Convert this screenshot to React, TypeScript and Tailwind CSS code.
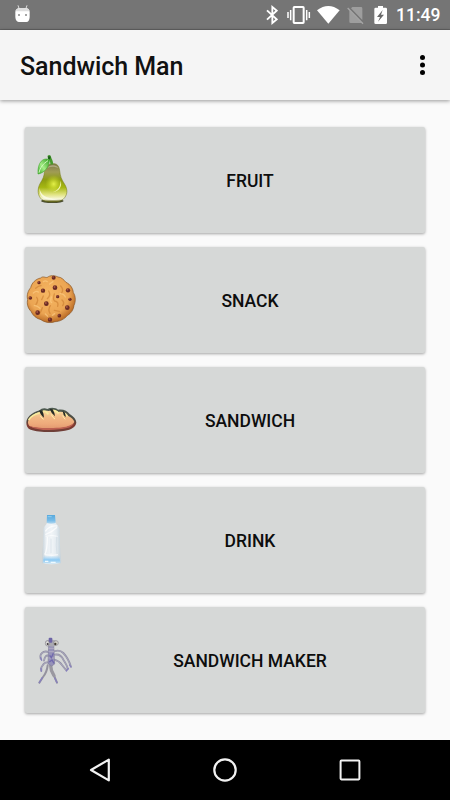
import type { ReactNode } from "react";

interface MenuItem {
  label: string;
  icon: ReactNode;
}

function PearIcon() {
  return (
    <svg viewBox="30 45 150 150" className="w-[50px] h-[50px] shrink-0 overflow-visible">
      <defs>
        <linearGradient id="pear" x1="0" y1="0" x2="0" y2="1">
          <stop offset="0" stopColor="#7d7a4c" />
          <stop offset="0.22" stopColor="#a09c55" />
          <stop offset="0.42" stopColor="#8d9c12" />
          <stop offset="0.62" stopColor="#a5b612" />
          <stop offset="0.8" stopColor="#dfe27c" />
          <stop offset="0.93" stopColor="#f8f7dc" />
          <stop offset="1" stopColor="#57570f" />
        </linearGradient>
        <radialGradient id="pearShine">
          <stop offset="0" stopColor="#e3f04a" />
          <stop offset="1" stopColor="#c8d820" stopOpacity="0" />
        </radialGradient>
        <linearGradient id="leaf" x1="0" y1="1" x2="1" y2="0">
          <stop offset="0" stopColor="#3aa52c" />
          <stop offset="0.45" stopColor="#a5ee86" />
          <stop offset="1" stopColor="#2f9a20" />
        </linearGradient>
      </defs>
      <ellipse cx="112" cy="183" rx="34" ry="6" fill="#4b4d30" />
      <path
        d="M116 71C101 70 92 78 89 92C87 111 84 116 75 131C66 148 68 168 80 178C90 188 134 188 144 178C158 166 159 149 149 133C139 117 136 109 134 92C132 78 127 71 116 71Z"
        fill="url(#pear)"
        stroke="#71760f"
        strokeWidth="1.5"
      />
      <ellipse cx="116" cy="132" rx="25" ry="27" fill="url(#pearShine)" />
      <path d="M137 122C142 139 133 153 113 157C130 150 136 140 137 122Z" fill="#f4f7b5" />
      <path d="M97 84C102 73 126 72 130 85C121 79 107 79 97 84Z" fill="#c1bd98" opacity="0.7" />
      <path d="M74 144C76 164 90 177 134 178C91 186 71 171 74 144Z" fill="#fbfbe8" opacity="0.85" />
      <path d="M98 52C96 46 103 43 107 47C109 56 114 60 115 73L107 74C106 64 101 61 98 52Z" fill="#469b2c" />
      <path d="M100 48L107 50L105 59L99 56Z" fill="#1e581c" />
      <path d="M103 59C85 51 67 66 69 102C88 99 104 80 103 59Z" fill="url(#leaf)" stroke="#48ad34" strokeWidth="2" />
      <path d="M72 98C75 84 85 70 99 62" fill="none" stroke="#d3fac0" strokeWidth="3" />
    </svg>
  );
}

const chips = [
  [116, 53, 6], [72, 68, 5], [84, 92, 6.5], [120, 83, 7], [159, 91, 6.5], [128, 110, 5],
  [46, 114, 5.5], [94, 131, 7], [165, 118, 5], [157, 143, 7], [68, 158, 7], [133, 167, 5.5], [105, 179, 6.5],
];

function CookieIcon() {
  return (
    <svg viewBox="30 45 150 150" className="w-[50px] h-[50px] shrink-0 overflow-visible">
      <defs>
        <radialGradient id="cookie" cx="0.45" cy="0.4" r="0.6">
          <stop offset="0" stopColor="#f6b763" />
          <stop offset="0.7" stopColor="#eba553" />
          <stop offset="1" stopColor="#b96a25" />
        </radialGradient>
      </defs>
      <path
        d="M77 54C84 47 91 54 97 52C106 45 119 46 129 51C139 51 147 60 153 67C168 74 174 87 175 98C183 109 182 126 177 136C176 149 168 160 158 166C148 177 135 185 120 185C104 191 87 186 78 179C64 176 53 166 48 154C38 144 35 130 38 119C34 105 40 91 47 83C50 69 62 57 77 54Z"
        fill="url(#cookie)"
        stroke="#87511f"
        strokeWidth="2"
      />
      <g fill="none" stroke="#cb7d30" strokeWidth="4" strokeLinecap="round" opacity="0.6">
        <path d="M62 85Q71 77 78 77M65 112Q72 120 63 133" />
        <path d="M101 93Q109 106 97 116M118 102Q113 118 119 123Q132 125 128 139" />
        <path d="M82 143L76 158M106 137Q98 149 105 160M137 78Q147 88 140 99" />
        <path d="M141 120Q150 128 143 137M85 108L80 119M118 151L133 154" />
      </g>
      <g fill="none" stroke="#ffd18a" strokeWidth="4" strokeLinecap="round" opacity="0.6">
        <path d="M85 65Q91 60 97 65M55 99Q64 91 70 96M104 72L114 65M109 111Q105 126 110 128" />
        <path d="M58 137Q66 136 75 145M112 166L119 161M135 101Q147 101 151 111M91 162L98 169" />
      </g>
      {chips.map(([x, y, r]) => (
        <g key={`${x}-${y}`}>
          <circle cx={x} cy={y} r={r} fill="#6a2a24" />
          <circle cx={x - 1.5} cy={y - 2} r={r * 0.4} fill="#a65745" />
        </g>
      ))}
    </svg>
  );
}

function BreadIcon() {
  return (
    <svg viewBox="30 45 150 150" className="w-[50px] h-[50px] shrink-0 overflow-visible">
      <defs>
        <linearGradient id="bread" x1="0" y1="0" x2="0" y2="1">
          <stop offset="0" stopColor="#f8dca0" />
          <stop offset="0.4" stopColor="#f2b985" />
          <stop offset="0.75" stopColor="#eeaa7b" />
          <stop offset="1" stopColor="#e39a70" />
        </linearGradient>
        <linearGradient id="crust" x1="0" y1="0" x2="0" y2="1">
          <stop offset="0" stopColor="#4c5a50" />
          <stop offset="0.5" stopColor="#4e4a40" />
          <stop offset="0.75" stopColor="#84392f" />
          <stop offset="1" stopColor="#6b4039" />
        </linearGradient>
      </defs>
      <path
        d="M34 128C34 113 48 99 74 91C78 84 91 83 97 87C108 81 122 83 129 89C145 86 157 93 164 102C176 109 184 119 184 128C182 141 168 149 150 152C119 158 70 157 47 149C38 146 34 137 34 128Z"
        fill="url(#crust)"
      />
      <path
        d="M39 127C39 115 53 101 76 95C86 90 95 91 101 93C113 88 124 91 130 96C145 94 155 99 159 107C170 112 177 120 178 126C171 138 153 144 127 144C91 145 66 147 43 138C40 134 39 131 39 127Z"
        fill="url(#bread)"
      />
      <path d="M43 137C70 147 110 143 132 143C155 142 167 136 177 129C173 141 158 146 133 148C101 153 59 150 43 137Z" fill="#bd6151" />
      <path d="M41 120Q50 104 74 99M84 94Q93 92 100 103M112 91Q123 91 131 100M145 98Q154 103 157 109" fill="none" stroke="#f7eb9c" strokeWidth="5" />
      <path d="M73 91Q76 106 87 113Q87 102 82 92ZM104 87Q109 101 120 109Q119 98 113 88ZM143 94Q144 105 152 112Q152 104 149 97Z" fill="#252b25" />
      <path d="M76 108Q80 115 86 118M109 103Q112 113 120 117M143 106Q145 114 151 118" fill="none" stroke="#fff0aa" strokeWidth="3" />
    </svg>
  );
}

function BottleIcon() {
  return (
    <svg viewBox="30 45 150 150" className="w-[50px] h-[50px] shrink-0 overflow-visible">
      <defs>
        <linearGradient id="bottle" x1="0" y1="0" x2="1" y2="0">
          <stop offset="0" stopColor="#c3ced5" />
          <stop offset="0.2" stopColor="#e8eef3" />
          <stop offset="0.5" stopColor="#f1f5f8" />
          <stop offset="0.75" stopColor="#e4ebf0" />
          <stop offset="1" stopColor="#c3d1da" />
        </linearGradient>
        <linearGradient id="water" x1="0" y1="0" x2="0" y2="1">
          <stop offset="0" stopColor="#9bd0f5" stopOpacity="0" />
          <stop offset="0.55" stopColor="#8ccaf4" />
          <stop offset="1" stopColor="#c9e2f1" />
        </linearGradient>
        <linearGradient id="cap" x1="0" y1="0" x2="0" y2="1">
          <stop offset="0" stopColor="#58a9dc" />
          <stop offset="0.65" stopColor="#79bde9" />
          <stop offset="1" stopColor="#b4d8ef" />
        </linearGradient>
      </defs>
      <path
        d="M97 65C95 75 85 79 84 91C87 101 83 110 84 121C85 136 82 148 82 161C82 174 80 182 81 190Q109 196 138 190C140 177 136 169 136 157C136 143 134 131 135 119C136 107 132 100 135 90C134 79 123 73 121 65Z"
        fill="url(#bottle)"
      />
      <path d="M96 45H120L122 69Q109 73 95 69Z" fill="url(#cap)" />
      <path d="M98 50H110" stroke="#93cff1" strokeWidth="3" />
      <path d="M86 166H133L136 188Q109 194 84 188Z" fill="url(#water)" />
      <path d="M91 94Q103 76 127 78M91 104Q111 97 126 82M89 164Q97 152 97 111" fill="none" stroke="#fff" strokeWidth="4" opacity="0.75" />
      <path d="M108 116V160M125 107Q122 137 126 164" fill="none" stroke="#cfdbe3" strokeWidth="3" opacity="0.6" />
      <path d="M92 109Q109 104 128 109M90 164Q111 168 129 164" fill="none" stroke="#fff" strokeWidth="3" opacity="0.7" />
      <path d="M90 184H100M107 187H122" stroke="#eef9ff" strokeWidth="4" />
    </svg>
  );
}

function MakerIcon() {
  const limbs =
    "M101 96Q88 92 81 99Q74 104 77 116M101 107Q90 104 87 122M103 128Q89 124 83 136Q77 141 79 153M118 94Q134 88 145 99Q160 115 168 140M119 104Q137 101 145 119Q158 138 158 148M118 119Q133 123 141 135L153 150";
  return (
    <svg viewBox="30 45 150 150" className="w-[50px] h-[50px] shrink-0 overflow-visible">
      <g fill="none" strokeLinecap="round">
        <path d={limbs} stroke="#908ea5" strokeWidth="5.5" />
        <path d={limbs} stroke="#b3b0c2" strokeWidth="2" />
        <path d="M98 136Q96 156 84 171L73 188M109 133Q105 151 118 169L126 188" stroke="#94929e" strokeWidth="6" />
        <path d="M107 137Q107 152 117 167" stroke="#9a98a0" strokeWidth="10" />
        <path d="M82 173L73 188M119 174L126 188M77 113L80 121M78 145L79 153M160 145L154 153M164 135L168 141" stroke="#8780bd" strokeWidth="4" />
      </g>
      <path d="M101 77H116L119 132L110 138L99 131Z" fill="#9692b8" stroke="#807d9a" strokeWidth="2" />
      <path d="M101 85H117M100 95H117M100 114H119" stroke="#bfbac9" strokeWidth="2" />
      <path d="M104 106L109 113L115 100M103 126L111 120L117 130" fill="none" stroke="#7068ad" strokeWidth="4" />
      <path d="M91 66Q95 58 110 59Q126 60 130 69Q126 79 112 80Q95 80 91 66Z" fill="#aaa9b1" />
      <rect x="101" y="53" width="11" height="15" rx="3" fill="#6d64a6" />
      <ellipse cx="97" cy="70" rx="6" ry="8" fill="#d9d8d6" stroke="#88858e" strokeWidth="2" />
      <ellipse cx="123" cy="69" rx="7" ry="7" fill="#d3d1c8" stroke="#88858e" strokeWidth="2" />
      <circle cx="98" cy="72" r="3" fill="#3f393e" />
      <circle cx="121" cy="72" r="3.5" fill="#423a31" />
    </svg>
  );
}

const items: MenuItem[] = [
  { label: "FRUIT", icon: <PearIcon /> },
  { label: "SNACK", icon: <CookieIcon /> },
  { label: "SANDWICH", icon: <BreadIcon /> },
  { label: "DRINK", icon: <BottleIcon /> },
  { label: "SANDWICH MAKER", icon: <MakerIcon /> },
];

function StatusBar() {
  return (
    <div className="flex h-[30px] shrink-0 items-start border-b border-[#636363] bg-[#757575] pl-[15px] pr-[10px] text-white">
      <svg viewBox="45 0 45 90" className="h-[30px] w-[15px]">
        <path d="M54 16L58 28M81 16L77 28" stroke="#ddd" strokeWidth="3" />
        <path d="M46 37Q46 26 57 25H79Q89 26 89 37V51Q88 66 79 66H56Q47 65 46 51Z" fill="#fff" />
        <path d="M47 34Q49 25 59 25H78Q87 25 88 34Z" fill="#dedede" />
        <rect x="54" y="42" width="6" height="6" fill="#a5a5a5" />
        <rect x="75" y="42" width="6" height="6" fill="#a5a5a5" />
      </svg>
      <div className="ml-auto flex items-start">
        <svg viewBox="48 0 36 90" className="h-[30px] w-[12px]">
          <path d="M51 31L80 58L67 69V21L80 32L51 59" fill="none" stroke="#fff" strokeWidth="5.5" />
        </svg>
        <svg viewBox="110 0 72 90" className="ml-[9px] h-[30px] w-[24px]">
          <rect x="130" y="21" width="30" height="48" rx="2" fill="none" stroke="#fff" strokeWidth="6" />
          <path d="M113 36V54M121 30V61M169 30V61M177 36V54" stroke="#fff" strokeWidth="4.5" />
        </svg>
        <svg viewBox="200 0 69 90" className="ml-[6px] h-[30px] w-[23px]">
          <path d="M200 31Q234 5 268 31L234 71Z" fill="#fff" />
        </svg>
        <svg viewBox="290 0 51 90" className="ml-[7px] h-[30px] w-[17px]">
          <path d="M306 21H332Q336 21 336 25V60L302 25ZM297 31L334 69H301Q297 69 297 65Z" fill="#9e9e9e" />
          <path d="M292 24L338 71" stroke="#a6a6a6" strokeWidth="4" />
        </svg>
        <svg viewBox="372 0 39 90" className="ml-[10px] h-[30px] w-[13px]">
          <path d="M384 18H399V23H407Q411 23 411 27V68Q411 72 407 72H377Q373 72 373 68V27Q373 23 377 23H384Z" fill="#fff" />
          <path d="M398 30L381 51H390L384 65L402 44H393Z" fill="#686868" />
        </svg>
        <span className="ml-[9px] w-[44px] whitespace-nowrap text-[17.5px] font-medium leading-[30px]">11:49</span>
      </div>
    </div>
  );
}

export default function App() {
  return (
    <div className="flex h-[800px] w-[450px] flex-col overflow-hidden bg-[#fafafa] font-['Roboto',sans-serif]">
      <StatusBar />
      <header className="z-10 flex h-[70px] shrink-0 items-center justify-between bg-[#f5f5f5] pl-5 pr-[25px] shadow-[0_1px_4px_rgba(0,0,0,0.4)]">
        <h1 className="pt-1 text-[25px] font-medium leading-[30px] tracking-[-0.05px] text-[#111]">Sandwich Man</h1>
        <button aria-label="More options">
          <svg viewBox="0 0 5 20" className="h-5 w-[5px] overflow-visible fill-black">
            <circle cx="2.5" cy="2.5" r="2.5" />
            <circle cx="2.5" cy="10" r="2.5" />
            <circle cx="2.5" cy="17.5" r="2.5" />
          </svg>
        </button>
      </header>
      <main className="flex flex-1 flex-col gap-[14px] px-[25px] pt-[27px]">
        {items.map((item) => (
          <button
            key={item.label}
            className="flex h-[106px] items-center rounded-[2px] bg-[#d6d8d7] shadow-[0_1px_3px_rgba(0,0,0,0.35)]"
          >
            {item.icon}
            <span className="flex-1 pt-[2px] text-center text-[17.5px] font-medium leading-6 text-[#0d0d0d]">{item.label}</span>
          </button>
        ))}
      </main>
      <nav className="flex h-[60px] shrink-0 items-center justify-between bg-black px-[88px]">
        <svg viewBox="0 0 24 24" className="h-6 w-6 fill-none stroke-[#f2f2f2]">
          <path d="M3 12L20.8 1.6V22.4Z" strokeWidth="2.2" strokeLinejoin="round" />
        </svg>
        <svg viewBox="0 0 24 24" className="h-6 w-6 fill-none stroke-[#f2f2f2]">
          <circle cx="12" cy="12" r="10.7" strokeWidth="2.2" />
        </svg>
        <svg viewBox="0 0 24 24" className="h-6 w-6 fill-none stroke-[#f2f2f2]">
          <rect x="2.6" y="2.6" width="18.8" height="18.8" rx="0.8" strokeWidth="2" />
        </svg>
      </nav>
    </div>
  );
}
